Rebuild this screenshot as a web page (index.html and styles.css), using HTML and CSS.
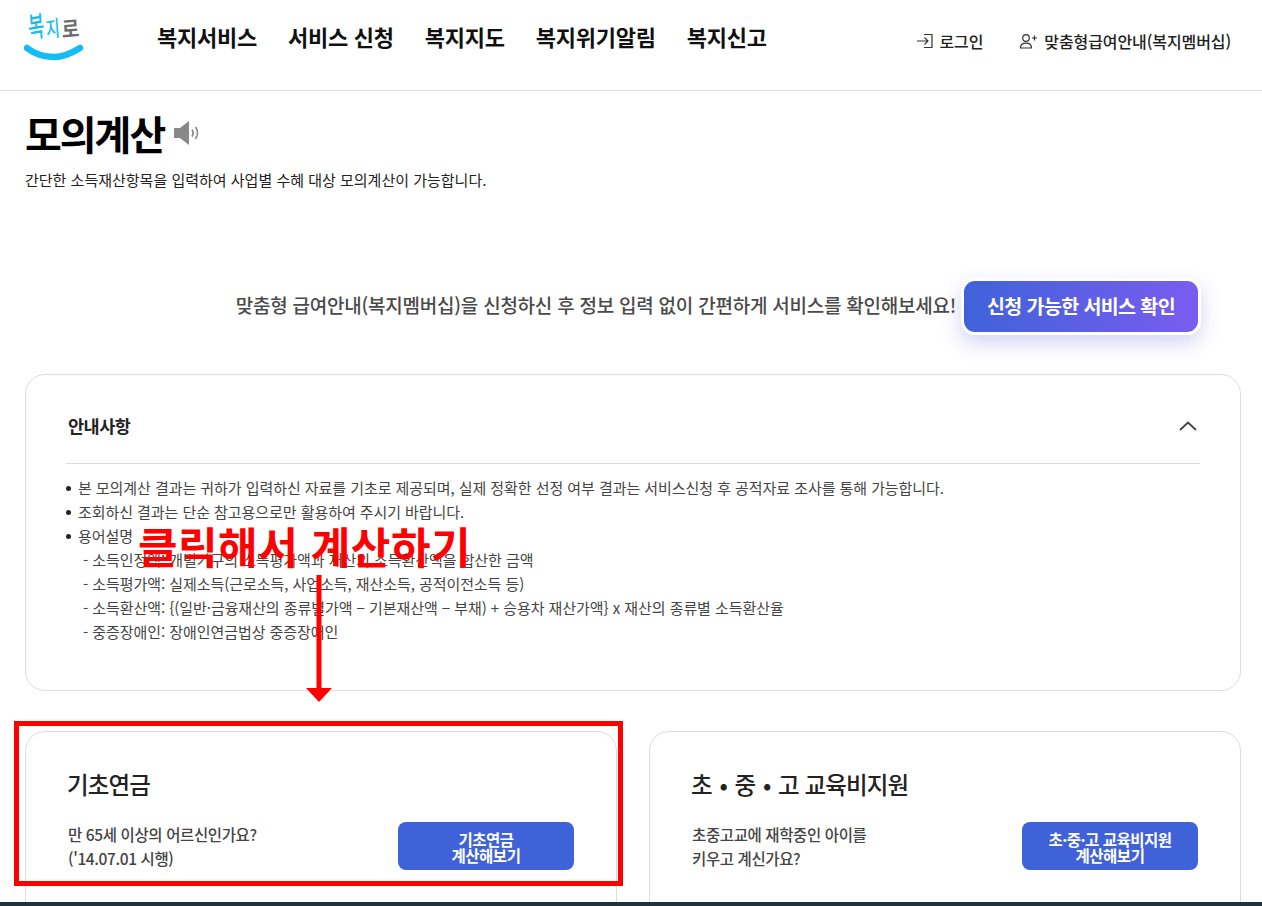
FILE: index.html
```html
<!DOCTYPE html>
<html lang="ko">
<head>
<meta charset="utf-8">
<title>모의계산</title>
<link rel="stylesheet" href="styles.css">
</head>
<body>
<div class="page">
  <header class="header">
    <a class="logo">
      <span class="logo-bok">복</span><span class="logo-ji">지</span><span class="logo-ro">로</span>
      <svg class="logo-smile" width="60" height="20" viewBox="0 0 60 20"><path d="M3 5 C 12 12, 20 14, 30 14 C 40 14, 48 10, 56 5" fill="none" stroke="#12bdf5" stroke-width="6.500" stroke-linecap="round"/></svg>
    </a>
    <nav class="nav">
      <a>복지서비스</a><a>서비스 신청</a><a>복지지도</a><a>복지위기알림</a><a>복지신고</a>
    </nav>
    <div class="util">
      <a class="util-link">
        <svg width="18" height="18" viewBox="0 0 18 18" fill="none" stroke="#333" stroke-width="1.2"><path d="M8 2.500h8v13H8M1 9h11M8.500 5.500 12 9l-3.500 3.500"/></svg>
        로그인</a>
      <a class="util-link">
        <svg width="20" height="18" viewBox="0 0 20 18" fill="none" stroke="#333" stroke-width="1.2"><circle cx="7" cy="6" r="3.300"/><path d="M1.500 16c0-3.500 2.500-4.800 5.500-4.800s5.500 1.300 5.500 4.800zM13 6h5M15.500 3.500v5"/></svg>
        맞춤형급여안내(복지멤버십)</a>
    </div>
  </header>

  <main class="main">
    <div class="title-row">
      <h1 class="title">모의계산</h1>
      <svg class="speaker" width="27" height="24" viewBox="0 0 27 24"><path d="M0 7h6l9-7v24l-9-7H0z" fill="#888"/><path d="M18 8.500c1.300 2 1.300 5 0 7M21.500 6c2.500 3.500 2.500 8.500 0 12" fill="none" stroke="#888" stroke-width="1.700"/></svg>
    </div>
    <p class="lead">간단한 소득재산항목을 입력하여 사업별 수혜 대상 모의계산이 가능합니다.</p>

    <div class="promo">
      <p class="promo-text">맞춤형 급여안내(복지멤버십)을 신청하신 후 정보 입력 없이 간편하게 서비스를 확인해보세요!</p>
      <a class="promo-btn">신청 가능한 서비스 확인</a>
    </div>

    <section class="notice">
      <div class="notice-head">
        <h2 class="notice-title">안내사항</h2>
        <svg width="18" height="10" viewBox="0 0 18 10" fill="none" stroke="#444" stroke-width="1.800"><path d="M1 9 9 1.500 17 9"/></svg>
      </div>
      <ul class="notice-list">
        <li>본 모의계산 결과는 귀하가 입력하신 자료를 기초로 제공되며, 실제 정확한 선정 여부 결과는 서비스신청 후 공적자료 조사를 통해 가능합니다.</li>
        <li>조회하신 결과는 단순 참고용으로만 활용하여 주시기 바랍니다.</li>
        <li>용어설명
          <div class="term">- 소득인정액: 개별가구의 소득평가액과 재산의 소득환산액을 합산한 금액</div>
          <div class="term">- 소득평가액: 실제소득(근로소득, 사업소득, 재산소득, 공적이전소득 등)</div>
          <div class="term">- 소득환산액: {(일반·금융재산의 종류별가액 − 기본재산액 − 부채) + 승용차 재산가액} x 재산의 종류별 소득환산율</div>
          <div class="term">- 중증장애인: 장애인연금법상 중증장애인</div>
        </li>
      </ul>
    </section>

    <div class="cards">
      <article class="card">
        <h3 class="card-title">기초연금</h3>
        <div class="card-body">
          <p class="card-text">만 65세 이상의 어르신인가요?<br>('14.07.01 시행)</p>
          <a class="card-btn">기초연금<br>계산해보기</a>
        </div>
      </article>
      <article class="card">
        <h3 class="card-title">초 <span class="card-dot">•</span> 중 <span class="card-dot">•</span> 고 교육비지원</h3>
        <div class="card-body">
          <p class="card-text">초중고교에 재학중인 아이를<br>키우고 계신가요?</p>
          <a class="card-btn">초·중·고 교육비지원<br>계산해보기</a>
        </div>
      </article>
    </div>
  </main>

  <div class="annot-text">클릭해서 계산하기</div>
  <svg class="annot-arrow" width="26" height="130" viewBox="0 0 26 130"><path d="M13 0v118" stroke="#f00" stroke-width="5"/><path d="M0 113h26l-13 14z" fill="#f00"/></svg>
  <div class="annot-box"></div>
  <div class="footer-edge"></div>
</div>
</body>
</html>
```
FILE: styles.css
```css
* { box-sizing: border-box; }
html, body { margin: 0; padding: 0; height: 906px; overflow: hidden; background: #fff; }
body { font-family: "Noto Sans CJK KR", "Noto Sans", sans-serif; color: #222; }
p, h1, h2, h3, ul { margin: 0; padding: 0; }

.page { position: relative; width: 1262px; height: 906px; overflow: hidden; }

.header { display: flex; align-items: flex-start; height: 91px; border-bottom: 1px solid #e1e1e1; padding-left: 25px; }
.logo { position: relative; display: block; width: 60px; height: 62px; margin-top: 9px; }
.logo-bok, .logo-ji, .logo-ro { position: absolute; display: block; line-height: 1; white-space: nowrap; font-weight: 500; }
.logo-bok { left: 2px; top: 2px; font-size: 22px; color: #17bdf2; transform: scale(.8, 1.3) rotate(-6deg); transform-origin: left top; }
.logo-ji { left: 20px; top: 9px; font-size: 20px; color: #17bdf2; transform: scale(.75, 1.1) rotate(-6deg); transform-origin: left top; }
.logo-ro { left: 36px; top: 9px; font-size: 20px; color: #6d6d6d; font-weight: 700; transform: scale(.95, 1.1) rotate(-4deg); transform-origin: left top; }
.logo-smile { position: absolute; left: -1px; top: 34px; }

.nav { display: flex; gap: 31px; margin-left: 72px; margin-top: 21px; }
.nav a { font-size: 22px; line-height: 30px; font-weight: 700; color: #111; letter-spacing: -0.25px; white-space: nowrap; }

.util { display: flex; gap: 36px; margin-left: auto; margin-right: 31px; margin-top: 30px; }
.util-link { display: flex; align-items: center; gap: 5px; font-size: 16px; line-height: 22px; font-weight: 500; color: #222; letter-spacing: -0.1px; white-space: nowrap; }

.main { padding: 0 21px 0 25px; }
.title-row { display: flex; align-items: center; gap: 10px; margin-top: 17px; height: 50px; }
.title { font-size: 40px; line-height: 50px; font-weight: 700; color: #000; letter-spacing: -2px; }
.lead { margin-top: 9px; font-size: 15px; line-height: 26px; color: #222; }

.promo { display: flex; justify-content: flex-end; align-items: center; gap: 5px; margin-top: 85px; padding-right: 40px; }
.promo-text { margin-bottom: 3px; font-size: 19px; line-height: 28px; font-weight: 500; color: #4a4a4a; letter-spacing: -0.24px; white-space: nowrap; }
.promo-btn { display: block; width: 240px; height: 57px; border: 3px solid #fff; border-radius: 14px; background: linear-gradient(90deg, #3f62d9, #7a5cf0); color: #fff; font-size: 19.500px; line-height: 49px; font-weight: 700; text-align: center; letter-spacing: -0.6px; box-shadow: 0 8px 20px rgba(80, 80, 210, .25); }

.notice { margin-top: 39px; height: 317px; border: 1px solid #ddd; border-radius: 20px; padding: 0 40px; }
.notice-head { display: flex; justify-content: space-between; align-items: center; height: 89px; border-bottom: 1px solid #ddd; padding: 14px 3px 0 2px; }
.notice-title { font-size: 17.500px; line-height: 26px; font-weight: 700; color: #222; letter-spacing: -0.5px; }
.notice-list { list-style: none; margin-top: 12px; }
.notice-list li { position: relative; padding-left: 12px; font-size: 15px; line-height: 24px; color: #444; letter-spacing: -0.06px; white-space: nowrap; }
.notice-list li::before { content: ""; position: absolute; left: 0; top: 10px; width: 5px; height: 5px; border-radius: 50%; background: #222; }
.term { padding-left: 5px; }

.cards { display: grid; grid-template-columns: 592px 592px; gap: 32px; margin-top: 40px; }
.card { height: 200px; border: 1px solid #ddd; border-radius: 20px; padding: 35px 42px 0 41px; }
.card-title { font-size: 23.500px; line-height: 34px; font-weight: 500; color: #222; letter-spacing: -0.9px; }
.card-dot { margin: 0 2px; }
.card-body { display: flex; justify-content: space-between; align-items: center; margin-top: 21px; }
.card-text { font-size: 15.500px; line-height: 24px; font-weight: 500; color: #444; letter-spacing: -0.38px; padding-left: 1px; white-space: nowrap; }
.card-btn { display: block; width: 176px; height: 48px; padding-top: 9px; border-radius: 8px; background: #3f62d9; color: #fff; font-size: 15.500px; line-height: 16px; font-weight: 700; text-align: center; letter-spacing: -0.5px; white-space: nowrap; }

.annot-text { position: absolute; left: 138px; top: 515px; font-size: 43px; line-height: 60px; font-weight: 700; color: #f00; letter-spacing: 0.5px; white-space: nowrap; }
.annot-arrow { position: absolute; left: 306px; top: 575px; }
.annot-box { position: absolute; left: 14px; top: 721px; width: 609px; height: 165px; border: 5px solid #f00; }
.footer-edge { position: absolute; left: 0; top: 902px; width: 100%; height: 4px; background: #1f333c; }
```
